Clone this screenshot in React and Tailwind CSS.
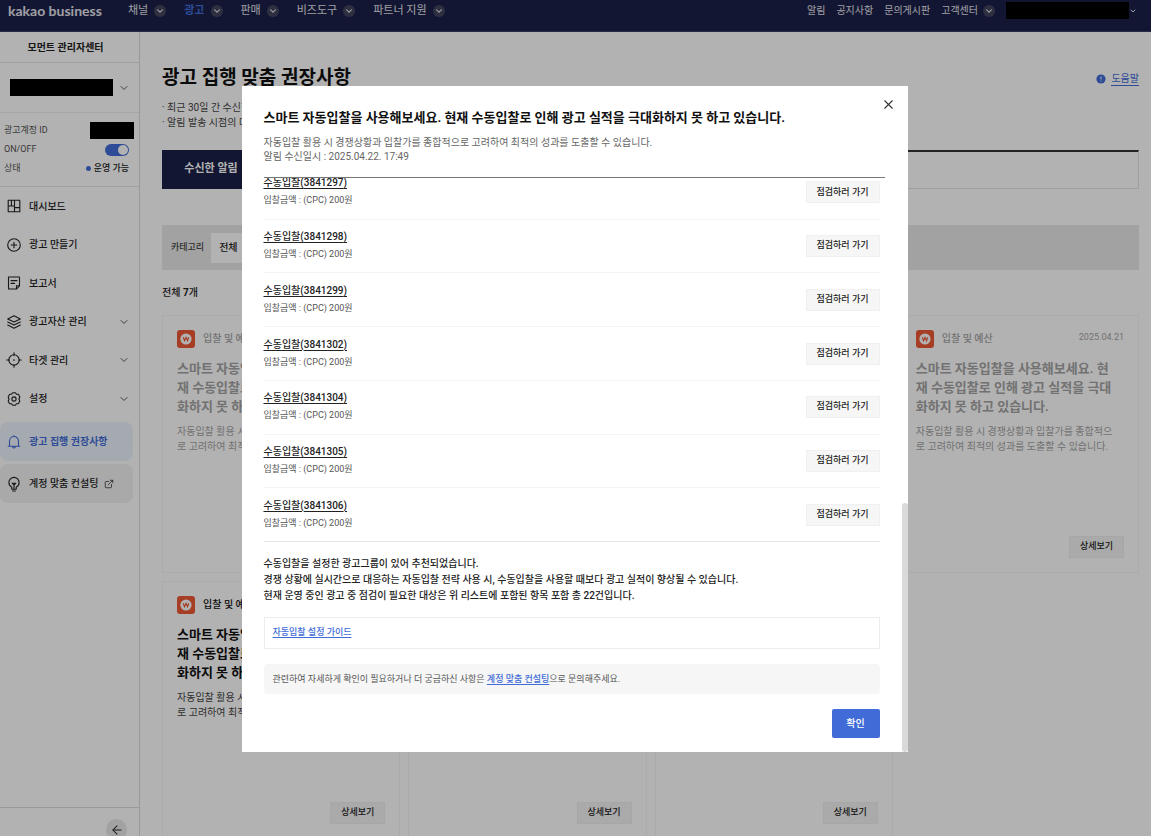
import { ChevronDown, X, ArrowLeft, ExternalLink } from 'lucide-react';

const channels = [
    { label: '채널' },
    { label: '광고', active: true },
    { label: '판매' },
    { label: '비즈도구' },
    { label: '파트너 지원' },
];

const bids = [3841297, 3841298, 3841299, 3841302, 3841304, 3841305, 3841306];

const cards = [
    { id: 1, read: true, date: '2025.04.22' },
    { id: 2, read: true, date: '2025.04.22' },
    { id: 3, read: true, date: '2025.04.21' },
    { id: 4, read: true, date: '2025.04.21' },
    { id: 5, read: false, date: '2025.04.20' },
    { id: 6, read: false, date: '2025.04.20' },
    { id: 7, read: false, date: '2025.04.20' },
];

function Icon({ children }) {
    return (
        <svg viewBox="0 0 16 16" className="w-4 h-4 shrink-0" fill="none" stroke="currentColor" strokeWidth="1.1" strokeLinejoin="round" strokeLinecap="round">
            {children}
        </svg>
    );
}

const menu = [
    {
        label: '대시보드',
        icon: <Icon><path d="M2.2 2.2h11.600v11.600H2.200zM8.500 2.200v11.600M2.200 8h6.300M8.500 9.600h5.300M5.400 2.200V8" /></Icon>,
    },
    {
        label: '광고 만들기',
        icon: <Icon><circle cx="8" cy="8" r="6.3" /><path d="M8 5.2v5.6M5.2 8h5.6" /></Icon>,
    },
    {
        label: '보고서',
        icon: <Icon><path d="M2.5 2h11v8.8L10.6 14H2.5zM13.3 10.8h-2.8V14M5 5.6h6M5 8.4h3.6" /></Icon>,
    },
    {
        label: '광고자산 관리',
        more: true,
        icon: <Icon><path d="M8 1.8l6.3 3.1L8 8 1.7 4.9zM1.7 8L8 11.1 14.3 8M1.7 11L8 14.2 14.3 11" /></Icon>,
    },
    {
        label: '타겟 관리',
        more: true,
        icon: <Icon><circle cx="8" cy="8" r="5.2" /><circle cx="8" cy="8" r=".3" fill="currentColor" /><path d="M8 .8v2.6M8 12.600v2.600M.8 8h2.600M12.600 8h2.600" /></Icon>,
    },
    {
        label: '설정',
        more: true,
        icon: <Icon><path d="M6.6 1.700h2.800l1 1.500 1.900.1 1.500 2.500-.8 2.200.8 2.200-1.500 2.500-1.900.1-1 1.500H6.600l-1-1.500-1.900-.1-1.500-2.500.8-2.200-.8-2.200 1.500-2.500 1.900-.1z" /><circle cx="8" cy="8" r="2.1" /></Icon>,
    },
];

function RoundChevron() {
    return (
        <span className="w-3 h-3 rounded-full bg-[#43465f] text-white flex items-center justify-center">
            <ChevronDown className="w-[10px] h-[10px]" strokeWidth={2.5} />
        </span>
    );
}

function Header() {
    return (
        <header className="h-8 shrink-0 bg-[#1b2048] border-b border-[#3a4069] pl-2 pr-[14px] pb-[10px] flex items-center text-[#e4e4ec] whitespace-nowrap">
            <a href="#home" className="w-[120px] text-[14px] leading-5 font-bold font-[family-name:Lato,sans-serif]">kakao business</a>
            <nav className="flex items-center gap-[18px] text-[11px] leading-4">
                {channels.map((c) => (
                    <button key={c.label} type="button" className={c.active ? 'flex items-center gap-[6px] font-bold text-[#416cd8]' : 'flex items-center gap-[6px]'}>
                        {c.label}
                        <RoundChevron />
                    </button>
                ))}
            </nav>
            <div className="ml-auto flex items-center gap-[11px] text-[10px] leading-4">
                <a href="#alarm">알림</a>
                <a href="#notice">공지사항</a>
                <a href="#qna">문의게시판</a>
                <button type="button" className="flex items-center gap-[5px]">
                    고객센터
                    <RoundChevron />
                </button>
                <button type="button" aria-label="내 계정" className="flex items-center">
                    <span className="w-[123px] h-[17px] bg-black" />
                    <ChevronDown className="w-2 h-2" strokeWidth={3} />
                </button>
            </div>
        </header>
    );
}

function Sidebar() {
    return (
        <aside className="w-[140px] shrink-0 border-r border-[#dcdcdc] flex flex-col text-[10px] text-[#222]">
            <h2 className="h-[31px] flex items-center justify-center font-bold border-b border-[#e4e4e4]">
                <a href="#moment" className="pr-2">모먼트 관리자센터</a>
            </h2>
            <button type="button" aria-label="광고계정 선택" className="h-[50px] pl-[10px] pr-[9px] flex items-center justify-between border-b border-[#eeeeee]">
                <span className="w-[103px] h-[17px] bg-black" />
                <ChevronDown className="w-3 h-3" strokeWidth={1.5} />
            </button>
            <dl className="h-[74px] pl-1 pr-[10px] pt-2 text-[9px] text-[#555] border-b border-[#e4e4e4]">
                <div className="h-[19px] flex items-center justify-between">
                    <dt>광고계정 ID</dt>
                    <dd className="w-11 h-[17px] bg-black -mr-[5px]" />
                </div>
                <div className="h-[19px] flex items-center justify-between">
                    <dt><label htmlFor="onoff">ON/OFF</label></dt>
                    <dd className="flex">
                        <input
                            id="onoff"
                            type="checkbox"
                            defaultChecked
                            className="appearance-none w-6 h-3 rounded-full bg-[#ccc] checked:bg-[#416cd8] p-px flex checked:justify-end before:w-[10px] before:h-[10px] before:rounded-full before:bg-white"
                        />
                    </dd>
                </div>
                <div className="h-[19px] flex items-center justify-between">
                    <dt>상태</dt>
                    <dd className="flex items-center gap-[3px] text-[#222] font-medium">
                        <span className="w-[5px] h-[5px] rounded-full bg-[#416cd8]" />
                        운영 가능
                    </dd>
                </div>
            </dl>
            <nav className="flex flex-col font-medium">
                <div className="h-[231px] flex flex-col">
                    {menu.map((m) => (
                        <a key={m.label} href="#menu" className="flex-1 pl-[6px] pr-[9px] flex items-center gap-[7px]">
                            {m.icon}
                            {m.label}
                            {m.more && <ChevronDown className="ml-auto w-3 h-3" strokeWidth={1.5} />}
                        </a>
                    ))}
                </div>
                <a href="#recommend" className="mt-1 mr-[6px] h-[39px] pl-[6px] flex items-center gap-[7px] rounded-lg bg-[#edf4fd] text-[#416cd8] font-bold">
                    <Icon><path d="M2.2 12.3h11.6M3.5 12.1V7a4.5 4.5 0 0 1 9 0v5.1M8 2.5V1.6M6.6 12.500a1.400 1.400 0 0 0 2.800 0" /></Icon>
                    광고 집행 권장사항
                </a>
                <a href="#consulting" className="mt-[3px] mr-[6px] h-[39px] pl-[6px] flex items-center gap-[7px] rounded-lg bg-[#f2f2f2]">
                    <Icon><path d="M5.8 11.3C4 10.3 2.9 8.6 2.9 6.5a5.1 5.1 0 0 1 10.2 0c0 2.1-1.1 3.8-2.9 4.8v1.9H5.8zM6.6 15h2.8M6.200 7.200h3.600L8 9.200zM8 9.200v3.600" /></Icon>
                    <span className="flex items-center gap-[6px]">
                        계정 맞춤 컨설팅
                        <ExternalLink className="w-[10px] h-[10px]" strokeWidth={1.75} />
                    </span>
                </a>
            </nav>
            <div className="mt-auto h-[29px] pt-[11px] pr-3 border-t border-[#dcdcdc] flex justify-end">
                <button type="button" aria-label="메뉴 접기" className="w-[21px] h-[21px] shrink-0 rounded-full bg-[#e8e8e8] flex items-center justify-center">
                    <ArrowLeft className="w-[14px] h-[14px]" strokeWidth={1.75} />
                </button>
            </div>
        </aside>
    );
}

function Card({ card }) {
    return (
        <article className={card.read ? 'min-h-[258px] p-[14px] border border-[#f5f5f5] flex flex-col text-[#a4a4a4]' : 'min-h-[258px] p-[14px] border border-[#f5f5f5] flex flex-col text-[#111]'}>
            <div className="flex items-center gap-2 text-[10px] leading-[18px] font-medium">
                <svg viewBox="0 0 18 18" className="w-[18px] h-[18px]">
                    <rect width="18" height="18" rx="3" fill="#ec5a36" />
                    <circle cx="9" cy="9" r="5.6" fill="#fff" />
                    <path d="M6.3 7.2l1.200 3.500L9 7.500l1.500 3.200 1.200-3.500" fill="none" stroke="#ec5a36" strokeWidth="1.2" />
                </svg>
                입찰 및 예산
                <time className="ml-auto mb-1 text-[9px] leading-[14px] font-normal">{card.date}</time>
            </div>
            <h3 className="mt-[11px] text-[13px] leading-[19px] font-bold whitespace-nowrap">
                스마트 자동입찰을 사용해보세요. 현<br />
                재 수동입찰로 인해 광고 실적을 극대<br />
                화하지 못 하고 있습니다.
            </h3>
            <p className={card.read ? 'mt-[8px] text-[10px] leading-[15px] whitespace-nowrap' : 'mt-[8px] text-[10px] leading-[15px] whitespace-nowrap text-[#444]'}>
                자동입찰 활용 시 경쟁상황과 입찰가를 종합적으<br />
                로 고려하여 최적의 성과를 도출할 수 있습니다.
            </p>
            <button type="button" className="mt-auto self-end w-[55px] h-[22px] border border-[#f0f0f0] bg-[#f4f4f4] text-[9px] font-medium text-[#222]">상세보기</button>
        </article>
    );
}

function Main() {
    return (
        <main className="flex-1 min-w-0 pl-[22px] pr-3 pt-8 text-[10px] text-[#444]">
            <div className="flex items-center justify-between">
                <h1 className="text-[19px] leading-7 font-bold text-[#111]">광고 집행 맞춤 권장사항</h1>
                <a href="#help" className="mt-[2px] flex items-center gap-[5px] text-[#416cd8]">
                    <svg viewBox="0 0 10 10" className="w-[10px] h-[10px]">
                        <circle cx="5" cy="5" r="4.6" fill="currentColor" />
                        <path d="M5 2.5v3M5 6.7v.8" stroke="#fff" strokeWidth="1" />
                    </svg>
                    <span className="border-b border-[#416cd8] leading-[13px]">도움말</span>
                </a>
            </div>
            <p className="mt-2 leading-[15px]">
                · 최근 30일 간 수신한 알림을 확인할 수 있습니다.<br />
                · 알림 발송 시점의 데이터를 기준으로 제공됩니다.
            </p>
            <div className="mt-5 h-[39px] flex">
                <button type="button" className="w-[98px] bg-[#1b2048] text-white text-[11px] font-bold">수신한 알림</button>
                <div className="flex-1 border-t-2 border-[#333] border-b border-b-[#e4e4e4] border-r border-r-[#e4e4e4]" />
            </div>
            <div className="mt-9 h-[45px] pl-[9px] flex items-center gap-[7px] bg-[#e9e9e9]">
                <label htmlFor="category" className="text-[9px] font-medium">카테고리</label>
                <select id="category" className="appearance-none w-[120px] h-[30px] px-2 bg-white font-medium text-[#222]">
                    <option>전체</option>
                </select>
            </div>
            <p className="mt-[15px] leading-4 font-medium text-[#222]">전체 <b>7</b>개</p>
            <div className="mt-[14px] grid grid-cols-4 gap-2">
                {cards.map((c) => <Card key={c.id} card={c} />)}
            </div>
        </main>
    );
}

function BidDialog() {
    return (
        <div className="fixed inset-0 pt-[2px] pr-[2px] bg-black/30 flex items-center justify-center">
            <section role="dialog" aria-labelledby="dialog-title" className="relative w-full max-w-[666px] max-h-[666px] bg-white flex flex-col">
                <button type="button" aria-label="닫기" className="absolute top-[11px] right-3 text-[#333]">
                    <X className="w-[15px] h-[15px]" strokeWidth={1.75} />
                </button>
                <header className="ml-[22px] mr-[23px] pt-[22px] pb-[13px] border-b border-[#777] text-[10px] leading-[14px] text-[#666]">
                    <h2 id="dialog-title" className="mb-[8px] text-[13px] leading-5 font-bold text-[#111]">
                        스마트 자동입찰을 사용해보세요. 현재 수동입찰로 인해 광고 실적을 극대화하지 못 하고 있습니다.
                    </h2>
                    <p>자동입찰 활용 시 경쟁상황과 입찰가를 종합적으로 고려하여 최적의 성과를 도출할 수 있습니다.</p>
                    <p>알림 수신일시 : 2025.04.22. 17:49</p>
                </header>
                {/* reversed column keeps the list scrolled to its end */}
                <div className="min-h-0 flex flex-col-reverse overflow-y-auto [scrollbar-width:none]">
                    <div className="pl-[22px] pr-7 pb-[14px]">
                        <ul className="h-[376px] flex flex-col">
                            {bids.map((id) => (
                                <li key={id} className="flex-1 flex items-center justify-between border-b border-[#f3f3f3] last:border-[#e4e4e4]">
                                    <div>
                                        <a href="#bid" className="block text-[10px] leading-4 font-medium text-[#222] underline underline-offset-2">수동입찰({id})</a>
                                        <p className="text-[9px] leading-[18px] text-[#555]">입찰금액 : (CPC) 200원</p>
                                    </div>
                                    <button type="button" className="w-[74px] h-[22px] border border-[#f0f0f0] bg-[#f6f6f6] text-[9px] font-medium text-[#222]">점검하러 가기</button>
                                </li>
                            ))}
                        </ul>
                        <p className="mt-[14px] text-[10px] leading-4 font-medium text-[#222]">
                            수동입찰을 설정한 광고그룹이 있어 추천되었습니다.<br />
                            경쟁 상황에 실시간으로 대응하는 자동입찰 전략 사용 시, 수동입찰을 사용할 때보다 광고 실적이 향상될 수 있습니다.<br />
                            현재 운영 중인 광고 중 점검이 필요한 대상은 위 리스트에 포함된 항목 포함 총 22건입니다.
                        </p>
                        <div className="mt-[13px] h-8 px-2 border border-[#ececec] flex items-center text-[9px] font-medium">
                            <a href="#guide" className="text-[#416cd8] underline underline-offset-2">자동입찰 설정 가이드</a>
                        </div>
                        <p className="mt-[15px] px-[9px] rounded-sm bg-[#f6f6f6] text-[9px] leading-[30px] text-[#555]">
                            관련하여 자세하게 확인이 필요하거나 더 궁금하신 사항은 <a href="#consulting" className="font-medium text-[#416cd8] underline underline-offset-2">계정 맞춤 컨설팅</a>으로 문의해주세요.
                        </p>
                        <div className="mt-[15px] flex justify-end">
                            <button type="button" className="w-12 h-[29px] rounded-xs bg-[#416cd8] text-[10px] font-medium text-white">확인</button>
                        </div>
                    </div>
                </div>
                <span className="absolute right-0 bottom-0 w-[6px] h-[249px] rounded-sm bg-[#d9d9d9]" />
            </section>
        </div>
    );
}

export default function App() {
    return (
        <div lang="ko" className="h-screen overflow-hidden flex flex-col bg-white font-[family-name:Roboto,'Noto_Sans_CJK_KR',sans-serif]">
            <Header />
            <div className="flex-1 min-h-0 flex">
                <Sidebar />
                <Main />
            </div>
            <BidDialog />
        </div>
    );
}
